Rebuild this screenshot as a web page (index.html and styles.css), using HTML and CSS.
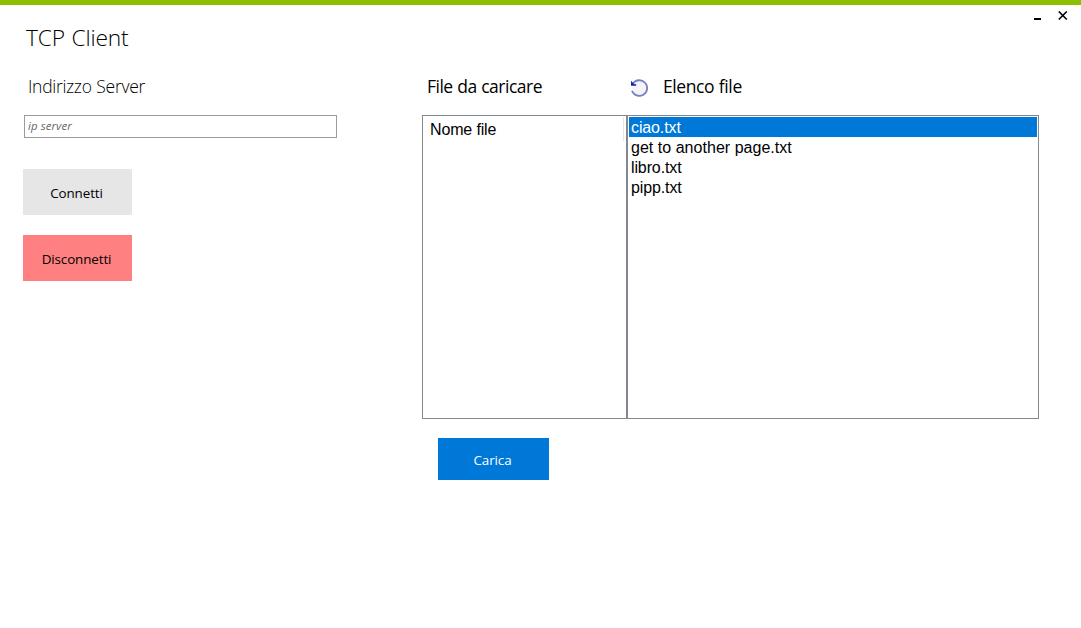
FILE: index.html
```html
<!DOCTYPE html>
<html lang="it">
<head>
<meta charset="utf-8">
<title>TCP Client</title>
<link rel="stylesheet" href="styles.css">
</head>
<body>
<div class="window">
  <header class="titlebar">
    <h1 class="title">TCP Client</h1>
    <div class="controls">
      <svg class="control" width="10" height="10" viewBox="0 0 10 10"><path d="M1 7h7v2H1z" fill="#000"/></svg>
      <svg class="control" width="10" height="10" viewBox="0 0 10 10"><path d="M.8.5l8 8M8.8.5l-8 8" stroke="#000" stroke-width="1.6"/></svg>
    </div>
  </header>
  <main class="content">
    <section class="server">
      <h2 class="heading light"><span>Indirizzo Server</span></h2>
      <input class="address" type="text" placeholder="ip server">
      <button class="button connect">Connetti</button>
      <button class="button disconnect">Disconnetti</button>
    </section>
    <section class="files">
      <div class="headings">
        <h2 class="heading upload"><span>File da caricare</span></h2>
        <svg class="refresh" width="20" height="20" viewBox="0 0 20 20">
          <circle cx="10.5" cy="10.2" r="7" fill="#f4f4f6"/>
          <path d="M4 5.5A7.8 7.8 0 1 1 3 12.7" fill="none" stroke="#7681c3" stroke-width="1.8"/>
          <path d="M2 2.7v5h5.2V6.2H5.4L3.6 4.4z" fill="#1c20b0"/>
        </svg>
        <h2 class="heading list-title"><span>Elenco file</span></h2>
      </div>
      <div class="lists">
        <div class="list names"><span class="column">Nome file</span></div>
        <ul class="list entries">
          <li class="entry selected">ciao.txt</li>
          <li class="entry long">get to another page.txt</li>
          <li class="entry">libro.txt</li>
          <li class="entry">pipp.txt</li>
        </ul>
      </div>
      <button class="button send">Carica</button>
    </section>
  </main>
</div>
</body>
</html>
```
FILE: styles.css
```css
* { box-sizing: border-box; margin: 0; padding: 0; }
body { background: #fff; color: #000; font-family: "Open Sans", sans-serif; }
.window { height: 628px; border-top: 5px solid #8cbf00; overflow: hidden; }
.titlebar { display: flex; justify-content: space-between; height: 70px; padding: 6px 13px 0 26px; }
.title { font-size: 22.8px; font-weight: 300; line-height: 54px; letter-spacing: -0.2px; word-spacing: 1px; }
.controls { display: flex; gap: 15px; }
.control { display: block; }
.content { display: flex; }
.server { display: flex; flex-direction: column; align-items: flex-start; width: 422px; padding-left: 23px; }
.heading { height: 40px; font-size: 17.5px; font-weight: 400; line-height: 22px; letter-spacing: -0.5px; word-spacing: 0.5px; white-space: nowrap; }
.light { padding-left: 5px; font-weight: 300; letter-spacing: -0.3px; }
.address { width: 313px; height: 23px; margin-left: 1px; padding: 0 3px 2px; border: 1px solid #999b9f; font: italic 11.4px "Open Sans", sans-serif; letter-spacing: 0.1px; }
.address::placeholder { color: #666; opacity: 1; }
.button { display: block; width: 109px; height: 46px; padding: 2px 2px 0 0; border: 0; font: 13.4px "Open Sans", sans-serif; color: #000; letter-spacing: -0.1px; }
.connect { margin-top: 31px; background: #e6e6e6; }
.disconnect { margin-top: 20px; background: #ff8080; }
.headings { display: flex; height: 40px; }
.upload { width: 207px; padding-left: 5px; }
.refresh { display: block; margin-top: 3px; }
.list-title { padding-left: 14px; letter-spacing: -0.4px; }
.lists { display: flex; height: 304px; font: 16px/20px "Liberation Sans", Arial, sans-serif; }
.list { border: 1px solid #828790; }
.names { width: 205px; padding: 1px 2px; }
.column { display: block; height: 24px; padding-left: 5px; border-right: 1px solid #e5e5e5; line-height: 26px; letter-spacing: -0.15px; }
.entries { width: 412px; padding: 1px; list-style: none; }
.entry { height: 20px; padding-left: 2px; line-height: 21px; letter-spacing: -0.12px; }
.long { letter-spacing: 0.03px; }
.selected { background: #0078d7; color: #fff; }
.send { width: 111px; height: 42px; margin: 19px 0 0 16px; background: #0078d7; color: #fff; }
```
